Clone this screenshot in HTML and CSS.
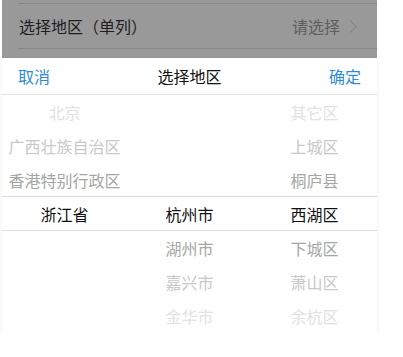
FILE: index.html
```html
<!DOCTYPE html>
<html lang="zh-CN">
<head>
    <meta charset="UTF-8">
    <meta name="viewport" content="width=device-width, initial-scale=1.0">
    <title>选择地区</title>
    <link rel="stylesheet" href="styles.css">
</head>
<body>
    <div class="screen">
        <div class="mask">
            <div class="cell">
                <span class="cell-title">选择地区（单列）</span>
                <span class="cell-value">请选择 <span class="arrow"></span></span>
            </div>
        </div>

        <div class="picker">
            <div class="picker-head">
                <span class="btn">取消</span>
                <span class="picker-title">选择地区</span>
                <span class="btn">确定</span>
            </div>
            <div class="picker-body">
                <div class="col">
                    <div class="item f3">北京</div>
                    <div class="item f2">广西壮族自治区</div>
                    <div class="item f1">香港特别行政区</div>
                    <div class="item on">浙江省</div>
                    <div class="item"></div>
                    <div class="item"></div>
                    <div class="item"></div>
                </div>
                <div class="col">
                    <div class="item"></div>
                    <div class="item"></div>
                    <div class="item"></div>
                    <div class="item on">杭州市</div>
                    <div class="item f1">湖州市</div>
                    <div class="item f2">嘉兴市</div>
                    <div class="item f3">金华市</div>
                </div>
                <div class="col">
                    <div class="item f3">其它区</div>
                    <div class="item f2">上城区</div>
                    <div class="item f1">桐庐县</div>
                    <div class="item on">西湖区</div>
                    <div class="item f1">下城区</div>
                    <div class="item f2">萧山区</div>
                    <div class="item f3">余杭区</div>
                </div>
                <div class="band"></div>
            </div>
        </div>
    </div>
</body>
</html>
```

FILE: styles.css
```css
body {
    margin: 0;
    background: #fff;
    font-family: "Noto Sans CJK SC", "Noto Sans", sans-serif;
    font-size: 16px;
}
.screen {
    width: 375px;
    margin-left: 2px;
}
.mask {
    background: #999;
    height: 58px;
    padding-top: 3px;
    box-sizing: border-box;
}
.cell {
    margin-left: 16px;
    height: 46px;
    box-sizing: border-box;
    border-top: 1px solid #888;
    border-bottom: 1px solid #888;
    display: flex;
    align-items: center;
    justify-content: space-between;
    padding: 0 22px 0 1px;
}
.cell-title {
    color: #1e1e1e;
}
.cell-value {
    color: #5e5e5e;
    display: flex;
    align-items: center;
}
.arrow {
    width: 8px;
    height: 8px;
    border-top: 1px solid #858585;
    border-right: 1px solid #858585;
    transform: rotate(45deg);
    margin-left: 6px;
}
.picker {
    background: #fff;
    box-shadow: 0 2px 4px rgba(0, 0, 0, 0.08);
}
.picker-head {
    height: 37px;
    box-sizing: border-box;
    border-bottom: 1px solid #e3e3e3;
    display: flex;
    align-items: center;
    justify-content: space-between;
    padding: 0 16px;
}
.btn {
    color: #2f8ad6;
}
.picker-title {
    color: #111;
}
.picker-body {
    position: relative;
    display: grid;
    grid-template-columns: repeat(3, 1fr);
}
.item {
    height: 34px;
    line-height: 34px;
    text-align: center;
    white-space: nowrap;
}
.f3 { color: #e2e2e2; }
.f2 { color: #c8c8c8; }
.f1 { color: #a6a6a6; }
.on { color: #111; }
.band {
    position: absolute;
    left: 0;
    right: 0;
    top: 101px;
    height: 35px;
    box-sizing: border-box;
    border-top: 1px solid #dedede;
    border-bottom: 1px solid #dedede;
    pointer-events: none;
}
```
